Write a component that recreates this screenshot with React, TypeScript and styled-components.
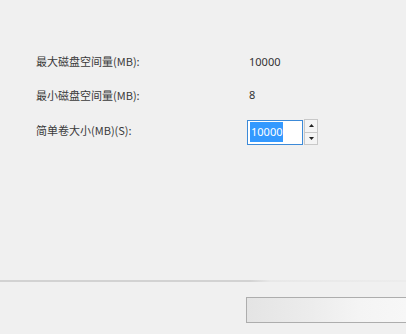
import React from 'react';
import styled, { createGlobalStyle } from 'styled-components';

const GlobalStyle = createGlobalStyle`
  html, body {
    margin: 0;
    padding: 0;
    background: #f0f0f0;
    font-family: "Noto Sans CJK SC", "Noto Sans", sans-serif;
  }
`;

const rows = [
  { label: '最大磁盘空间量(MB):', value: '10000' },
  { label: '最小磁盘空间量(MB):', value: '8' },
];

const App = () => {
  return (
    <>
      <GlobalStyle />
      <Page>
        <Form>
          {rows.map((row) => (
            <Row key={row.label}>
              <Label>{row.label}</Label>
              <Value>{row.value}</Value>
            </Row>
          ))}
          <Row>
            <Label>简单卷大小(MB)(S):</Label>
            <Spin>
              <SpinInput>
                <Selected>10000</Selected>
              </SpinInput>
              <SpinButtons>
                <SpinButton>
                  <Arrow viewBox="0 0 5 3">
                    <path d="M0 3 L2.5 0 L5 3 Z" />
                  </Arrow>
                </SpinButton>
                <SpinButton>
                  <Arrow viewBox="0 0 5 3">
                    <path d="M0 0 L2.5 3 L5 0 Z" />
                  </Arrow>
                </SpinButton>
              </SpinButtons>
            </Spin>
          </Row>
        </Form>
        <Footer>
          <Separator />
          <ButtonBar>
            <WideButton />
          </ButtonBar>
        </Footer>
      </Page>
    </>
  );
};

export default App;

const Page = styled.div`
  width: 406px;
  height: 334px;
  display: flex;
  flex-direction: column;
  justify-content: space-between;
  overflow: hidden;
`;

const Form = styled.div`
  display: flex;
  flex-direction: column;
  gap: 7.5px;
  padding: 48px 0 0 36px;
`;

const Row = styled.div`
  display: grid;
  grid-template-columns: 211px auto;
  align-items: center;
  height: 26px;
`;

const Label = styled.div`
  font-size: 11px;
  color: #3a3a3a;
`;

const Value = styled.div`
  font-family: "Noto Sans", sans-serif;
  font-size: 11px;
  color: #333;
  padding-left: 2px;
`;

const Spin = styled.div`
  display: flex;
  align-items: center;
  gap: 1px;
  margin-top: 4px;
`;

const SpinInput = styled.div`
  width: 52px;
  height: 23px;
  border: 1px solid #3c8ad8;
  background: #fff;
  display: flex;
  align-items: center;
  padding-left: 2px;
`;

const Selected = styled.span`
  background: #3399ff;
  color: #fff;
  font-family: "Noto Sans", sans-serif;
  font-size: 11px;
  line-height: 20px;
  padding: 0 1px;
`;

const SpinButtons = styled.div`
  display: flex;
  flex-direction: column;
  width: 12px;
  height: 24px;
  border: 1px solid #c8c8c8;
  background: #f4f4f4;
`;

const SpinButton = styled.div`
  flex: 1;
  display: flex;
  align-items: center;
  justify-content: center;
  & + & {
    border-top: 1px solid #c8c8c8;
  }
`;

const Arrow = styled.svg`
  width: 5px;
  height: 3px;
  fill: #222;
`;

const Footer = styled.div`
  display: flex;
  flex-direction: column;
  padding-bottom: 11px;
`;

const Separator = styled.div`
  height: 2px;
  background: linear-gradient(to right, #d2d2d2 0, #d2d2d2 250px, #e8e8e8 270px, #ececec 100%);
`;

const ButtonBar = styled.div`
  display: flex;
  justify-content: flex-start;
  padding: 15px 0 0 246px;
`;

const WideButton = styled.div`
  width: 170px;
  height: 24px;
  border: 1px solid #adadad;
  border-right: none;
  background: linear-gradient(to right, #e4e4e4 0, #ececec 40%, #f4f4f4 70%, #f7f7f7 100%);
`;
